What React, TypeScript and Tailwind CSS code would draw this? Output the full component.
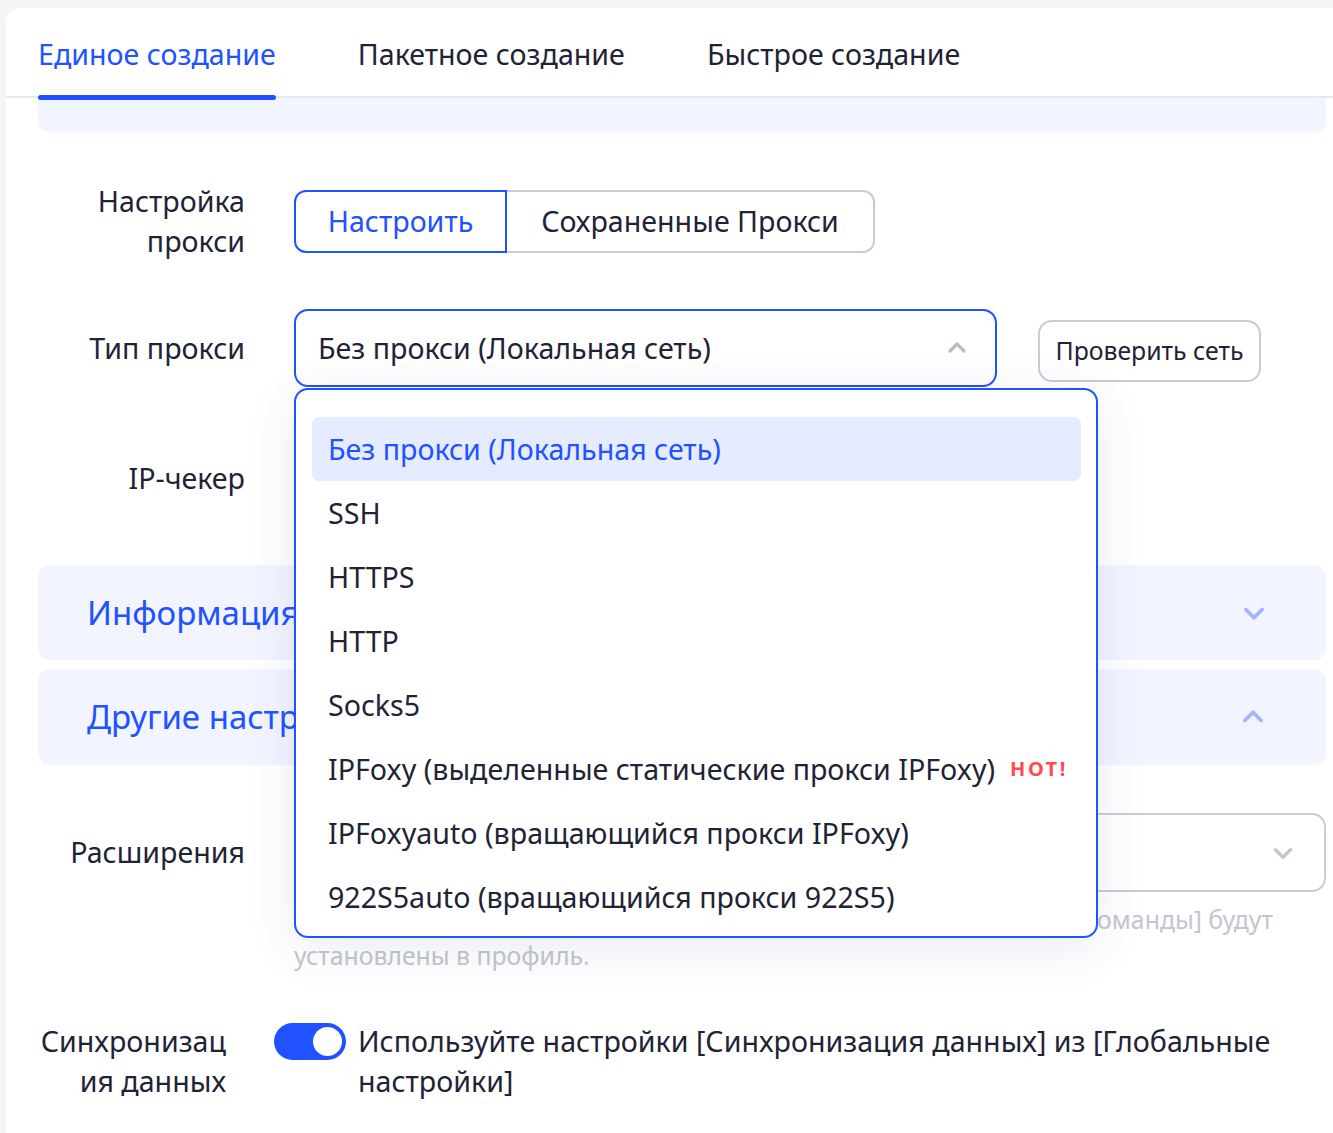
import React from "react";

const Chevron = ({ up, className }: { up?: boolean; className?: string }) => (
  <svg viewBox="0 0 24 24" className={className} fill="none" stroke="currentColor" strokeWidth={3.2} strokeLinecap="round" strokeLinejoin="round">
    {up ? <path d="M5 15l7-7 7 7" /> : <path d="M5 9l7 7 7-7" />}
  </svg>
);

const options = [
  "Без прокси (Локальная сеть)",
  "SSH",
  "HTTPS",
  "HTTP",
  "Socks5",
  "IPFoxy (выделенные статические прокси IPFoxy)",
  "IPFoxyauto (вращающийся прокси IPFoxy)",
  "922S5auto (вращающийся прокси 922S5)",
];

export default function App() {
  return (
    <div
      className="min-h-[1133px] w-[1333px] overflow-hidden bg-[#f4f5f7] pl-[6px] pt-[8px] text-[#1e2336]"
      style={{ fontFamily: '"Noto Sans", "Open Sans", sans-serif' }}
    >
      <div className="h-[1125px] rounded-tl-[14px] bg-white">
        {/* Tabs */}
        <div className="relative flex h-[90px] items-center gap-[82px] border-b-2 border-[#e6e8ee] pl-[32px] pt-[4px] text-[28.6px]">
          <div className="relative flex h-full items-center text-[#2152ff]">
            Единое создание
            <div className="absolute bottom-[-4px] left-0 right-0 h-[5px] rounded-full bg-[#2152ff]" />
          </div>
          <div>Пакетное создание</div>
          <div>Быстрое создание</div>
        </div>

        <div className="pl-[32px] pr-[7px]">
          <div className="h-[34px] rounded-b-[10px] bg-[#f2f5ff]" />

          {/* Row 1 */}
          <div className="mt-[49px] flex h-[80px] items-center">
            <div className="w-[207px] text-right text-[28.6px] leading-[40px]">
              Настройка
              <br />
              прокси
            </div>
            <div className="ml-[49px] flex h-[63px] text-[28.6px]">
              <div className="flex w-[213px] items-center justify-center rounded-l-[12px] border-2 border-[#2152ff] text-[#2152ff]">
                Настроить
              </div>
              <div className="flex w-[368px] items-center justify-center rounded-r-[12px] border-2 border-l-0 border-[#c9ccd4]">
                Сохраненные Прокси
              </div>
            </div>
          </div>

          {/* Row 2 */}
          <div className="relative z-10 mt-[48px] flex h-[78px] items-start">
            <div className="flex h-[78px] w-[207px] items-center justify-end text-[28.6px]">Тип прокси</div>
            <div className="relative ml-[49px]">
              <div className="flex h-[78px] w-[703px] items-center justify-between rounded-[14px] border-2 border-[#2152ff] pl-[22px] pr-[26px] text-[28.6px]">
                <span>Без прокси (Локальная сеть)</span>
                <Chevron up className="h-[24px] w-[24px] text-[#b8bcc6]" />
              </div>
              {/* Dropdown */}
              <div className="absolute left-0 top-[79px] w-[804px] rounded-[14px] border-2 border-[#2152ff] bg-white pb-[7px] pl-[16px] pr-[15px] pt-[27px] shadow-[0_10px_50px_rgba(40,60,140,0.10)]">
                {options.map((o, i) => (
                  <div
                    key={o}
                    className={
                      "flex h-[64px] items-center rounded-[7px] pl-[16px] text-[28.6px] " +
                      (i === 0 ? "bg-[#e6ecff] text-[#2152ff]" : "")
                    }
                  >
                    <span>{o}</span>
                    {i === 5 && (
                      <span className="ml-[15px] text-[20px] font-bold tracking-[2.5px] text-[#ff4a4f]">HOT!</span>
                    )}
                  </div>
                ))}
              </div>
            </div>
            <div className="ml-[41px] mt-[11px] flex h-[62px] w-[223px] items-center justify-center rounded-[14px] border-2 border-[#c9ccd4] text-[24.8px]">
              Проверить сеть
            </div>
          </div>

          {/* Row 3 */}
          <div className="mt-[52px] flex h-[78px] items-center">
            <div className="w-[207px] text-right text-[28.6px]">IP-чекер</div>
          </div>

          {/* Sections */}
          <div className="mt-[48px] flex h-[95px] items-center justify-between rounded-[12px] bg-[#f2f5ff] pl-[49px] pr-[58px] text-[33px] text-[#2152ff]">
            <span>Информация о профиле</span>
            <Chevron className="h-[28px] w-[28px] text-[#a3b5ff]" />
          </div>
          <div className="mt-[9px] flex h-[96px] items-center justify-between rounded-[12px] bg-[#f2f5ff] pl-[49px] pr-[59px] text-[33px] text-[#2152ff]">
            <span>Другие настройки</span>
            <Chevron up className="h-[28px] w-[28px] text-[#a3b5ff]" />
          </div>

          {/* Extensions */}
          <div className="mt-[48px] flex h-[79px] items-center">
            <div className="w-[207px] text-right text-[28.6px]">Расширения</div>
            <div className="ml-[49px] flex h-[79px] flex-1 items-center justify-end rounded-[14px] border-2 border-[#c9ccd4] pr-[28px]">
              <Chevron className="h-[26px] w-[26px] text-[#c3c6cd]" />
            </div>
          </div>
          <div className="ml-[256px] mt-[9px] text-[24.8px] leading-[36px] text-[#c3c6ce]">
            <div className="w-[979px] overflow-hidden whitespace-nowrap text-right">
              Расширения из [Глобальные настройки] - [Расширения команды] будут
            </div>
            <div>установлены в профиль.</div>
          </div>

          {/* Sync */}
          <div className="mt-[48px] flex items-start">
            <div className="w-[188px] text-right text-[28.6px] leading-[40px]">
              Синхронизац
              <br />
              ия данных
            </div>
            <div className="ml-[48px] mt-[2px] flex h-[37px] w-[72px] items-center justify-end rounded-full bg-[#2152ff] pr-[4px]">
              <div className="h-[29px] w-[29px] rounded-full bg-white" />
            </div>
            <div className="ml-[12px] flex-1 pr-[30px] text-[28.6px] leading-[40px]">
              Используйте настройки [Синхронизация данных] из [Глобальные настройки]
            </div>
          </div>
        </div>
      </div>
    </div>
  );
}
